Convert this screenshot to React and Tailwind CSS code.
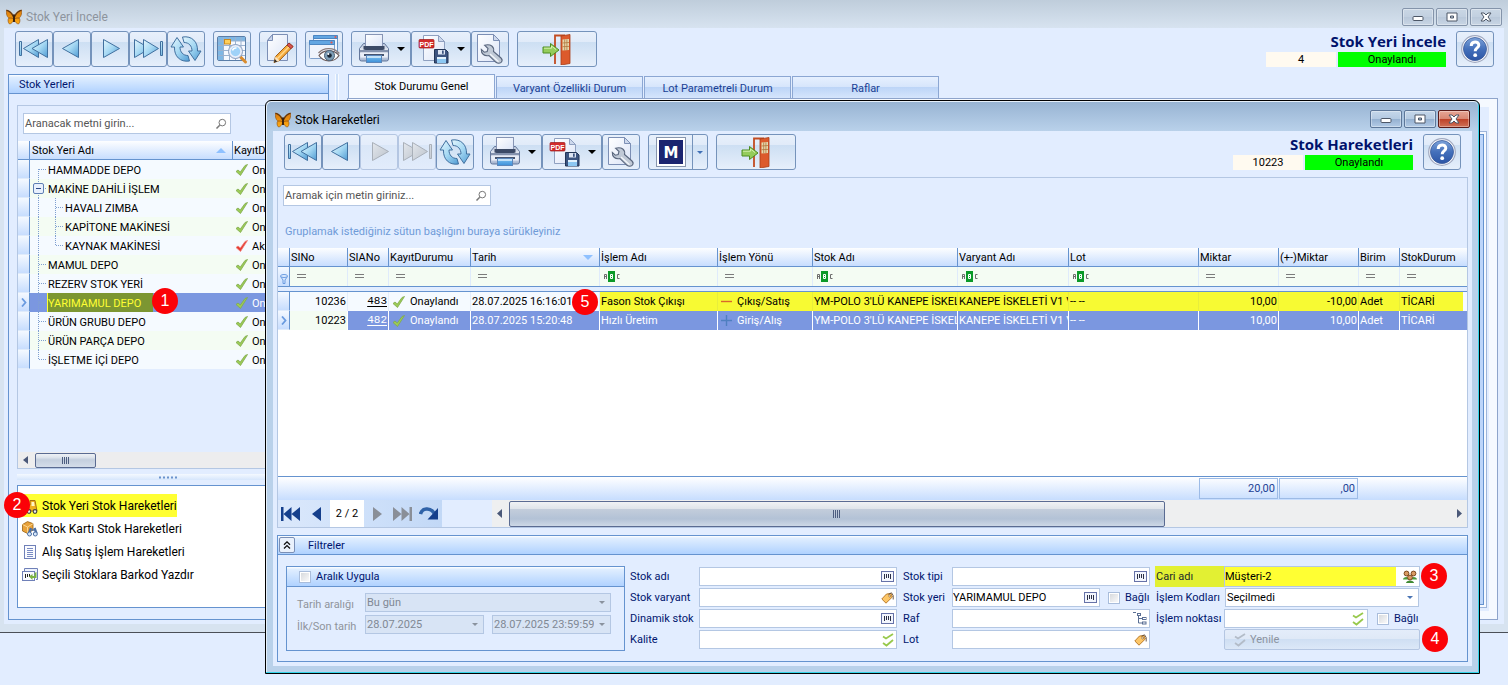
import React from "react";

const toolBtn =
  "flex h-9 shrink-0 items-center justify-center rounded-[3px] border border-[#7593bb] bg-[linear-gradient(#e8f0fb_0%,#e1ebf9_28%,#cddff3_30%,#dde9f8_75%,#e6effb_100%)]";
const toolBtnOff =
  "flex h-9 shrink-0 items-center justify-center rounded-[3px] border border-[#b4c6e2] bg-[linear-gradient(#e8f0fb_0%,#e4edfb_28%,#dae7f8_30%,#e2ecfb_100%)]";
const panelHead =
  "flex items-center border-b border-[#6593cf] bg-[linear-gradient(#ffffff_0%,#e0eeff_12%,#b0d2ff_100%)] text-[#00156e]";
const colHead =
  "h-[19px] overflow-hidden whitespace-nowrap border-b border-[#6593cf] border-r bg-[linear-gradient(#fdfeff,#c7ddfe)] p-0 pl-px pt-px text-left font-normal leading-[17px]";
const indicator =
  "h-[19px] border-b border-r border-b-[#dfebfb] border-r-[#6593cf] bg-[linear-gradient(#f4f9ff,#c7ddfe)] p-0";

/* ---------- icons ---------- */

function Defs() {
  return (
    <svg className="absolute h-0 w-0" aria-hidden="true">
      <defs>
        <linearGradient id="gBlue" x1="0" y1="0" x2="1" y2="1">
          <stop offset="0" stopColor="#e4f6fd" />
          <stop offset="0.5" stopColor="#a5d8f3" />
          <stop offset="1" stopColor="#4f9bd3" />
        </linearGradient>
        <linearGradient id="gGrey" x1="0" y1="0" x2="1" y2="1">
          <stop offset="0" stopColor="#e3e7ec" />
          <stop offset="1" stopColor="#bcc3cc" />
        </linearGradient>
        <linearGradient id="gPage" x1="0" y1="0" x2="1" y2="1">
          <stop offset="0" stopColor="#ffffff" />
          <stop offset="1" stopColor="#dbe4f7" />
        </linearGradient>
        <linearGradient id="gHelp" x1="0" y1="0" x2="0" y2="1">
          <stop offset="0" stopColor="#7da3da" />
          <stop offset="0.5" stopColor="#4470bb" />
          <stop offset="1" stopColor="#2c55a5" />
        </linearGradient>
        <linearGradient id="gTray" x1="0" y1="0" x2="0" y2="1">
          <stop offset="0" stopColor="#b7c3d8" />
          <stop offset="0.5" stopColor="#f0f3f9" />
          <stop offset="1" stopColor="#9fb0cc" />
        </linearGradient>
        <linearGradient id="gInk" x1="0" y1="0" x2="0" y2="1">
          <stop offset="0" stopColor="#7fc4f3" />
          <stop offset="1" stopColor="#3c8fd8" />
        </linearGradient>
        <linearGradient id="gWing" x1="0" y1="0" x2="0" y2="1">
          <stop offset="0" stopColor="#d9780c" />
          <stop offset="1" stopColor="#ffac12" />
        </linearGradient>
      </defs>
    </svg>
  );
}

function Butterfly() {
  return (
    <svg width="16" height="16" viewBox="0 0 16 16" className="shrink-0">
      <path d="M8 8C7 4.500 4 1.500.3 1 0 4.500 .8 7.500 2.800 9 1.600 10.500 1.800 13.500 3.500 15 5.500 15 7 12.500 8 10.500Z" fill="url(#gWing)" stroke="#8c4a0a" strokeWidth="0.600" />
      <path d="M8 8C9 4.500 12 1.500 15.700 1 16 4.500 15.200 7.500 13.200 9 14.400 10.500 14.200 13.500 12.500 15 10.500 15 9 12.500 8 10.500Z" fill="url(#gWing)" stroke="#8c4a0a" strokeWidth="0.600" />
      <path d="M.6 1.300C3.500 2.300 6 4.500 7.500 8M15.400 1.300C12.500 2.300 10 4.500 8.500 8" stroke="#5c3410" strokeWidth="1.200" fill="none" />
      <path d="M3 9C5 9 6.500 9 7.500 10M13 9C11 9 9.500 9 8.500 10" stroke="#8c4a0a" strokeWidth="0.800" fill="none" />
      <path d="M8 5.500v7.500" stroke="#3c2410" strokeWidth="2" fill="none" />
    </svg>
  );
}

function Nav({ kind, off }) {
  const fill = off ? "url(#gGrey)" : "url(#gBlue)";
  const stroke = off ? "#a9b0b9" : "#41709f";
  return (
    <svg width="32" height="32" viewBox="0 0 32 32" fill={fill} stroke={stroke} strokeWidth="1" strokeLinejoin="round">
      {kind === "first" && (
        <>
          <path d="M1.500 8.500h2v14h-2z" />
          <path d="M5.500 15.500 20.500 6.500v18z" />
          <path d="M14 15.500 29.500 6.500v18z" />
        </>
      )}
      {kind === "prev" && <path d="M6.500 15.500 22.500 6.500v18z" />}
      {kind === "next" && <path d="M25.500 15.500 9.500 6.500v18z" />}
      {kind === "last" && (
        <>
          <path d="M18 15.500 2.500 6.500v18z" />
          <path d="M26.500 15.500 11.500 6.500v18z" />
          <path d="M28.500 8.500h2v14h-2z" />
        </>
      )}
      {kind === "refresh" && (
        <>
          <path d="M7 4.500 13.500 14H10C10 19 13 22.500 18 22.500L19.500 28C10 29.500 4 23 4.500 14H1Z" />
          <path d="M25 27.500 18.500 18H22C22 13 19 9.500 14 9.500L12.500 4C22 2.500 28 9 27.500 18H31Z" />
        </>
      )}
    </svg>
  );
}

function TableSearch() {
  return (
    <svg width="32" height="32" viewBox="0 0 32 32">
      <rect x="1.500" y="3.500" width="28" height="24" rx="1.500" fill="#f6f9ff" stroke="#5b7ea8" />
      <path d="M2 4h27v4H2zM2 8h5v19H2z" fill="#7fb7e4" />
      <path d="M2 12.500h27M2 17.500h27M2 22.500h27M7.500 4v23M13.500 4v23M19.500 4v23M25 4v23M2 8h27" stroke="#9bb2cf" fill="none" />
      <rect x="8.500" y="6.500" width="6" height="4.500" fill="#ffcf5a" stroke="#c98a20" />
      <path d="M24 23.500 29.500 29" stroke="#d98c2f" strokeWidth="3" strokeLinecap="round" />
      <circle cx="19.500" cy="18.500" r="6" fill="#9fd2f8" stroke="#e8eefa" strokeWidth="2.500" />
      <circle cx="19.500" cy="18.500" r="7" fill="none" stroke="#6f88ad" strokeWidth="0.800" />
      <path d="M16.500 17.500a3.500 3.500 0 0 1 4-2.500" stroke="#fff" strokeWidth="1.500" fill="none" />
    </svg>
  );
}

function EditPage() {
  return (
    <svg width="32" height="32" viewBox="0 0 32 32">
      <path d="M10.500 1.500h15v26h-20v-20z" fill="url(#gPage)" stroke="#7c8fb5" />
      <path d="M10.500 1.500v6h-5z" fill="#c9d5ec" stroke="#7c8fb5" />
      <path d="M12 29.500 13.500 23.500 27 10 31 13.500 17.500 27.500Z" fill="#f6a93b" stroke="#9b5f1c" />
      <path d="M15.500 25.500 29 11.800" stroke="#ffd88b" strokeWidth="1.500" />
      <path d="M25 12 27 10 31 13.500 29 15.700Z" fill="#d9544f" stroke="#9c3430" />
      <path d="M12 29.500 13 26 15.500 28.500Z" fill="#333" />
      <path d="M13 26 13.500 23.500 17.500 27.500 15.200 28.500Z" fill="#fbe3c0" />
    </svg>
  );
}

function WindowEye() {
  return (
    <svg width="32" height="32" viewBox="0 0 32 32">
      <rect x="5.500" y="2.500" width="24" height="17" rx="1" fill="#f1f6fe" stroke="#6d97c8" />
      <path d="M5.500 2.500h24v3h-24z" fill="#62a6e2" stroke="#4c86c2" />
      <circle cx="27.500" cy="4" r="1.100" fill="#e4564c" />
      <rect x="1.500" y="7.500" width="25" height="18" rx="1" fill="#eef3fc" stroke="#7fa0cc" />
      <path d="M1.500 7.500h25v4h-25z" fill="#62a6e2" stroke="#4c86c2" />
      <circle cx="23.500" cy="9.500" r="1.100" fill="#e4564c" />
      <path d="M11 22.500C15 16.500 26 16 31 22.500 26 30 15.500 29.500 11 22.500Z" fill="#fff" stroke="#6b5a58" strokeWidth="1.200" />
      <path d="M10.500 20C15 14.500 26 13.500 31.300 20.500" stroke="#8a7c7c" strokeWidth="1.300" fill="none" />
      <circle cx="21.500" cy="22.500" r="5" fill="#7f9fb8" stroke="#4a6178" />
      <circle cx="21.500" cy="22.500" r="2.300" fill="#1b2735" />
      <circle cx="20.300" cy="21" r="1" fill="#fff" />
    </svg>
  );
}

function Printer() {
  return (
    <svg width="32" height="32" viewBox="0 0 32 32">
      <path d="M5.500 10.500h21l4 5v10.500q0 2-2 2h-25q-2 0-2-2V15.500z" fill="url(#gTray)" stroke="#64789c" />
      <rect x="7.500" y="1.500" width="17" height="12" fill="url(#gPage)" stroke="#8795b5" />
      <path d="M5.500 13h21v3.500q-10.500 3-21 0z" fill="#3c4a66" />
      <rect x="2" y="17" width="28" height="2.500" fill="#8492ad" />
      <rect x="2.500" y="19.500" width="27" height="5" fill="#e9eef7" />
      <rect x="6" y="21" width="20" height="2" fill="#46546f" />
      <rect x="8.500" y="22.500" width="15" height="7" fill="url(#gInk)" stroke="#5b86ba" />
      <path d="M9 24h14" stroke="#dff1fd" strokeWidth="1.500" />
    </svg>
  );
}

function PdfSave() {
  return (
    <svg width="32" height="32" viewBox="0 0 32 32">
      <path d="M5.500 2.500h15l6 6v19h-21z" fill="url(#gPage)" stroke="#8fa0c0" />
      <path d="M20.500 2.500v6h6z" fill="#cdd8ec" stroke="#8fa0c0" />
      <rect x="1" y="6.500" width="15" height="8.500" rx="1" fill="#d22b2b" stroke="#9c1818" strokeWidth="0.700" />
      <text x="8.500" y="13.500" textAnchor="middle" fontSize="7" fontWeight="bold" fill="#fff" fontFamily="Liberation Sans, sans-serif">PDF</text>
      <path d="M16.500 16.500h11l2.500 2.500v11h-13.500z" fill="#3c5480" stroke="#223556" />
      <rect x="20" y="17" width="7" height="4.500" fill="#dde5f3" />
      <rect x="24" y="17.500" width="1.700" height="3.300" fill="#3c5480" />
      <rect x="19" y="24" width="9" height="6" fill="#8cc7f2" />
      <path d="M19 25h9" stroke="#fff" strokeWidth="1.500" />
    </svg>
  );
}

function WrenchPage() {
  return (
    <svg width="32" height="32" viewBox="0 0 32 32">
      <path d="M3.500 1.500h16l6 6v21h-22z" fill="url(#gPage)" stroke="#7c8fb5" />
      <path d="M19.500 1.500v6h6z" fill="#cdd8ec" stroke="#7c8fb5" />
      <path d="M9.500 12.200 13 15.500 12.200 18.500 9.300 19.200 6.300 16.400C6 21 9.500 23.500 14 22.500L21 29.300C22.600 30.600 25.300 30.700 26.500 29 27.600 27.500 27 26 26 25L18.500 18.500C19.500 14 16 10.500 9.500 12.200Z" transform="translate(1)" fill="#c0c9d6" stroke="#59667d" strokeWidth="1.100" />
      <path d="M16 21 24.500 28.800" stroke="#f4f7fb" strokeWidth="1.300" />
    </svg>
  );
}

function Door() {
  return (
    <svg width="32" height="32" viewBox="0 0 32 32">
      <path d="M14 31V2.500H24" fill="none" stroke="#c24c22" strokeWidth="1.800" />
      <path d="M20 3 29 1.500V30.500L20 32Z" fill="#dc5a2c" stroke="#a93d18" strokeWidth="0.800" />
      <path d="M21.500 6.500 28 6V17L21.500 17.500Z" fill="#e6d9ae" />
      <path d="M23.700 6.500v11M25.900 6.500v11M21.500 10l6.500-.5M21.500 13.700l6.500-.3" stroke="#b1763c" strokeWidth="0.800" />
      <path d="M2 14H9.500V10.500L18 17 9.500 23.500V20H2Z" fill="#94cc5b" stroke="#4d8d22" />
      <path d="M3 15.200H10.500V13L15 16.500" stroke="#d4f0ae" fill="none" />
    </svg>
  );
}

function HelpMark() {
  return (
    <svg width="30" height="30" viewBox="0 0 30 30">
      <circle cx="15" cy="15" r="13.300" fill="#fdfdff" stroke="#a0a9c0" strokeWidth="1.200" />
      <circle cx="15" cy="15" r="11.500" fill="url(#gHelp)" stroke="#3a5a9a" strokeWidth="0.800" />
      <path d="M11.200 12C11.200 6.500 19 6.800 18.800 11.300 18.700 14 15.200 14 15.200 17.200" fill="none" stroke="#fff" strokeWidth="3" />
      <circle cx="15.200" cy="21.200" r="1.900" fill="#fff" />
    </svg>
  );
}

function Check({ color = "green" }) {
  const fill = color === "red" ? "#e63c34" : "#9ccb56";
  const line = color === "red" ? "#f08078" : "#7fa94c";
  return (
    <svg width="14" height="14" viewBox="0 0 14 14" className="shrink-0">
      <path d="M1 8.500 3 7 5.300 9 10 2.500 12.500 1.500 5.500 12.500Z" fill={fill} stroke={line} strokeWidth="0.800" />
    </svg>
  );
}

function DoubleCheck({ off }) {
  return (
    <svg width="12" height="14" viewBox="0 0 12 14" fill="none" stroke={off ? "#b3bcc8" : "#98c94c"} strokeWidth="1.800" className="shrink-0">
      <path d="M1 3.500 4 5.500 11 1" />
      <path d="M1 10 4.500 12.500 11 7" />
    </svg>
  );
}

function Magnifier() {
  return (
    <svg width="12" height="12" viewBox="0 0 12 12" fill="none" stroke="#777" className="shrink-0">
      <circle cx="7.300" cy="4.600" r="3.300" />
      <path d="M4.700 7.200 1.500 10.500" strokeWidth="1.500" />
    </svg>
  );
}

function Caret({ className = "text-black" }) {
  return (
    <svg width="8" height="4" viewBox="0 0 8 4" className={`shrink-0 ${className}`}>
      <path d="M0 0h8L4 4z" fill="currentColor" />
    </svg>
  );
}

function SmallCaret({ className }) {
  return (
    <svg width="6" height="3" viewBox="0 0 6 3" className={className}>
      <path d="M0 0h6L3 3z" fill="currentColor" />
    </svg>
  );
}

function Barcode() {
  return (
    <svg width="13" height="11" viewBox="0 0 13 11" className="shrink-0">
      <rect x="0.500" y="0.500" width="12" height="10" fill="#f3f6fd" stroke="#6672a8" />
      <path d="M3.500 3v5M5.500 3v4M7.500 3v4M9.500 3v5" stroke="#2b2f45" />
    </svg>
  );
}

function Tag() {
  return (
    <svg width="13" height="12" viewBox="0 0 13 12" className="shrink-0">
      <path d="M.8 7 5.500 2 10 1.500 11.300 5 5 11.200Z" fill="#fdc768" stroke="#b3721f" strokeWidth="0.900" />
      <path d="M7.500 2.300 10.500.8 12.200 3.500V7.500" fill="none" stroke="#5b4a3a" strokeWidth="0.900" />
      <circle cx="8.700" cy="4" r="1" fill="#fff" stroke="#7c4d16" strokeWidth="0.600" />
    </svg>
  );
}

function TreeIcon() {
  return (
    <svg width="14" height="13" viewBox="0 0 14 13" fill="none" stroke="#5a6f94" className="shrink-0">
      <path d="M0 0.500h3M5.500 3.500v7.500h4M5.500 6.500h4" />
      <rect x="4.500" y="1.500" width="3" height="2" />
      <rect x="9.500" y="5.500" width="3.500" height="2" />
      <rect x="9.500" y="10" width="3.500" height="2" />
    </svg>
  );
}

function People() {
  return (
    <svg width="14" height="13" viewBox="0 0 14 13" className="shrink-0">
      <path d="M0 9.500C0 6 6.500 6 6.500 9.500ZM7.500 9.500C7.500 6 14 6 14 9.500Z" fill="#4d9a3c" />
      <circle cx="3.500" cy="3.500" r="2.400" fill="#d99a62" stroke="#7d4a1e" />
      <circle cx="10.500" cy="3.500" r="2.400" fill="#d99a62" stroke="#7d4a1e" />
      <path d="M3 13C3 9.500 11 9.500 11 13Z" fill="#3f8a33" />
      <circle cx="7" cy="7.500" r="2.400" fill="#d99a62" stroke="#7d4a1e" />
    </svg>
  );
}

function Abc() {
  return (
    <svg width="16" height="11" viewBox="0 0 16 11" fill="none" stroke="#6d6d6d" className="block">
      <path d="M0.500 8V3.500h2V8M0.500 5.500h2M15.500 3.500h-2v4h2" />
      <rect x="4" y="0" width="7" height="11" fill="#0b9a28" stroke="none" />
      <path d="M6.500 3.500h2v2h-2zM6.500 5.500h2v2h-2z" stroke="#fff" />
    </svg>
  );
}

function Equals() {
  return (
    <svg width="9" height="5" viewBox="0 0 9 5" className="block">
      <path d="M0 0.500h9M0 3.500h9" stroke="#7b7b7b" />
    </svg>
  );
}

function Chevron() {
  return (
    <svg width="6" height="9" viewBox="0 0 6 9" className="mx-auto block">
      <path d="M1 .5 4.500 4.500 1 8.500" fill="none" stroke="#6a9be0" strokeWidth="1.800" />
    </svg>
  );
}

function Forklift() {
  return (
    <svg width="16" height="16" viewBox="0 0 16 16">
      <path d="M3 1v10" stroke="#6b5a20" strokeWidth="1.500" />
      <path d="M5 13V8l3-1V2.500h5L15 13Z" fill="#efb021" stroke="#a86f10" />
      <path d="M9.500 4h2.500l.7 4h-3.200z" fill="#fff5c5" />
      <circle cx="7" cy="13.500" r="1.800" fill="#eee" stroke="#444" strokeWidth="1.200" />
      <circle cx="13" cy="13.500" r="1.800" fill="#eee" stroke="#444" strokeWidth="1.200" />
    </svg>
  );
}

function BoxSearch() {
  return (
    <svg width="16" height="16" viewBox="0 0 16 16">
      <path d="M.5 3.500 5.500 .6l5.500 2V9L5.500 12.500.5 10Z" fill="#e9a23b" stroke="#9b6213" strokeWidth="0.800" />
      <path d="M.5 3.500 5.500 6 11 2.700M5.500 6v6.500" stroke="#fbd58c" strokeWidth="1" fill="none" />
      <path d="M9 7 7 12.500M12.500 7 14.500 12.500" stroke="#4c6fa3" strokeWidth="2.400" />
      <path d="M9.500 9h3" stroke="#4c6fa3" strokeWidth="1.500" />
      <circle cx="7.500" cy="13" r="2" fill="#d7e8fb" stroke="#4c6fa3" />
      <circle cx="13.300" cy="13" r="2" fill="#d7e8fb" stroke="#4c6fa3" />
    </svg>
  );
}

function Doc() {
  return (
    <svg width="16" height="16" viewBox="0 0 16 16">
      <rect x="2.500" y="1.500" width="11" height="13" fill="#fbfcff" stroke="#6f80b8" />
      <path d="M5 4.500h6M5 6.500h6M5 8.500h6M5 10.500h6M5 12.500h6" stroke="#7a8cc4" />
    </svg>
  );
}

function BarcodePrint() {
  return (
    <svg width="16" height="16" viewBox="0 0 16 16">
      <path d="M2.500 4V1.500h13v11H14" fill="#eef3fd" stroke="#6f80b8" />
      <rect x="0.500" y="4.500" width="12" height="9" fill="#f8faff" stroke="#6f80b8" />
      <path d="M3.500 7v4M5.500 7v3M7.500 7v3" stroke="#222" />
      <path d="M14.500 5v6h-4v2L7 9.500 10.500 7v2h2V6Z" fill="#7cb544" />
    </svg>
  );
}

/* ---------- shared pieces ---------- */

function Badge({ n, className }) {
  return (
    <span
      className={`pointer-events-none absolute z-20 flex size-[26px] items-center justify-center rounded-full bg-[#fb0207] font-['Liberation_Sans',sans-serif] text-base leading-none text-white ${className}`}
    >
      {n}
    </span>
  );
}

function WindowButtons({ active }) {
  const plain = active
    ? "border-[#5d7799] bg-[linear-gradient(#c5d7ea_0%,#b4cae2_48%,#94b0d0_50%,#b3cbe6_100%)]"
    : "border-[#8494aa] bg-[linear-gradient(#cad7e5_0%,#c2d0e0_48%,#b9c8da_50%,#c8d5e4_100%)]";
  const close = active
    ? "border-[#5a1a18] bg-[linear-gradient(#e6a696_0%,#d98774_48%,#bd4027_50%,#cf7158_100%)]"
    : plain;
  const base = "flex h-[18px] w-8 items-center justify-center rounded-[2px] border shadow-[inset_0_0_0_1px_rgba(255,255,255,0.35)]";
  return (
    <div className="flex gap-[2px]">
      <button type="button" aria-label="Simge durumuna küçült" className={`${base} ${plain}`}>
        <svg width="12" height="10" viewBox="0 0 12 10">
          <rect x="1" y="4.500" width="10" height="4" rx="1" fill="#fff" stroke="#4d5767" />
        </svg>
      </button>
      <button type="button" aria-label="Ekranı kapla" className={`${base} ${plain}`}>
        <svg width="12" height="10" viewBox="0 0 12 10">
          <path d="M1 1h10v8H1zM4.500 4v2h3V4z" fillRule="evenodd" fill="#fff" stroke="#4d5767" />
        </svg>
      </button>
      <button type="button" aria-label="Kapat" className={`${base} ${close}`}>
        <svg width="12" height="10" viewBox="0 0 12 10">
          <path d="M1 1h3l2 2 2-2h3L8 5l3 4H8L6 7 4 9H1l3-4z" fill="#fff" stroke="#4d5767" />
        </svg>
      </button>
    </div>
  );
}

function ToolButton({ label, width = "w-[38px]", off, children }) {
  return (
    <button type="button" aria-label={label} disabled={off} className={`${off ? toolBtnOff : toolBtn} ${width}`}>
      {children}
    </button>
  );
}

function NavButtons({ forwardOff }) {
  return (
    <div className="flex">
      <ToolButton label="İlk kayıt"><Nav kind="first" /></ToolButton>
      <ToolButton label="Önceki kayıt"><Nav kind="prev" /></ToolButton>
      <ToolButton label="Sonraki kayıt" off={forwardOff}><Nav kind="next" off={forwardOff} /></ToolButton>
      <ToolButton label="Son kayıt" off={forwardOff}><Nav kind="last" off={forwardOff} /></ToolButton>
      <ToolButton label="Yenile"><Nav kind="refresh" /></ToolButton>
    </div>
  );
}

function OutputButtons() {
  return (
    <div className="flex">
      <ToolButton label="Yazdır" width="w-[60px] gap-[7px]"><Printer /><Caret /></ToolButton>
      <ToolButton label="PDF kaydet" width="w-[60px] gap-[7px]"><PdfSave /><Caret /></ToolButton>
      <ToolButton label="Ayarlar"><WrenchPage /></ToolButton>
    </div>
  );
}

function RecordInfo({ title, id }) {
  return (
    <div className="ml-auto flex gap-[10px]">
      <div>
        <h1 className="h-[21px] text-right font-['Open_Sans',sans-serif] text-[15px] font-bold leading-[21px] text-[#00126b]">{title}</h1>
        <div className="flex justify-end gap-[2px] text-center leading-4">
          <div className="h-[15px] w-[70px] bg-[#fffaf0]">{id}</div>
          <div className="h-[15px] w-[108px] bg-[#00ff00]">Onaylandı</div>
        </div>
      </div>
      <ToolButton label="Yardım"><HelpMark /></ToolButton>
    </div>
  );
}

function SearchBox({ placeholder }) {
  return (
    <label className="flex h-[21px] w-[208px] items-center border border-[#b4c7e3] bg-white pl-px pr-[3px]">
      <input type="text" aria-label={placeholder} placeholder={placeholder} className="min-w-0 flex-1 outline-none placeholder:text-[#555]" />
      <Magnifier />
    </label>
  );
}

/* ---------- back window ---------- */

const places = [
  { name: "HAMMADDE DEPO", level: 0, first: true },
  { name: "MAKİNE DAHİLİ İŞLEM", level: 0, open: true },
  { name: "HAVALI ZIMBA", level: 1 },
  { name: "KAPİTONE MAKİNESİ", level: 1 },
  { name: "KAYNAK MAKİNESİ", level: 1, lastChild: true, bad: true },
  { name: "MAMUL DEPO", level: 0 },
  { name: "REZERV STOK YERİ", level: 0 },
  { name: "YARIMAMUL DEPO", level: 0, selected: true },
  { name: "ÜRÜN GRUBU DEPO", level: 0 },
  { name: "ÜRÜN PARÇA DEPO", level: 0 },
  { name: "İŞLETME İÇİ DEPO", level: 0, last: true },
];

function Branch({ row }) {
  const w = row.level ? 34 : 17;
  return (
    <svg width={w} height="19" viewBox={`0 0 ${w} 19`} className="shrink-0" fill="none" stroke="#7f9fd0" strokeDasharray="1 1">
      <path d={`M8.500 ${row.first ? 9 : 0}V${row.last ? 9 : 19}`} />
      {row.level === 0 && <path d="M9 9.500h8" />}
      {row.level === 1 && <path d={`M25.500 0V${row.lastChild ? 9 : 19}M26 9.500h8`} />}
      {row.open && (
        <>
          <rect x="3.500" y="4.500" width="10" height="10" rx="1.500" fill="#e8f0fd" stroke="#5f7fb4" strokeDasharray="none" />
          <path d="M6 9.500h5" stroke="#2d4a86" strokeDasharray="none" />
        </>
      )}
    </svg>
  );
}

function PlaceTree() {
  return (
    <table className="w-full table-fixed border-separate border-spacing-0">
      <colgroup>
        <col className="w-[12px]" />
        <col className="w-[203px]" />
        <col />
      </colgroup>
      <thead>
        <tr>
          <th className={colHead} aria-label="Satır" />
          <th className={colHead}>
            <span className="flex items-center justify-between pl-px pr-[6px]">
              Stok Yeri Adı
              <svg width="10" height="5" viewBox="0 0 10 5"><path d="M0 5h10L5 0z" fill="#8fc1ff" /></svg>
            </span>
          </th>
          <th className={colHead}>KayıtDurumu</th>
        </tr>
      </thead>
      <tbody className="leading-[21px]">
        {places.map((p, i) => (
          <tr key={p.name} className={p.selected ? "bg-[#7b97e0] text-white" : i % 2 ? "bg-[#f4fcf3]" : "bg-[#f5faff]"}>
            <td className={indicator}>{p.selected && <Chevron />}</td>
            <td className="h-[19px] p-0">
              <div className="flex h-[19px]">
                <Branch row={p} />
                <span className={p.selected ? "h-[19px] w-[106px] whitespace-nowrap border-l border-[#ffff33] bg-[#7c9632] text-[#ffff33]" : "h-[19px] whitespace-nowrap pl-px"}>
                  {p.name}
                </span>
              </div>
            </td>
            <td className="h-[19px] p-0">
              <div className="flex h-[19px] gap-[3px] whitespace-nowrap pl-[2px]">
                <span className="flex items-center"><Check color={p.bad ? "red" : "green"} /></span>
                {p.bad ? "Aktif Değil" : "Onaylandı"}
              </div>
            </td>
          </tr>
        ))}
      </tbody>
    </table>
  );
}

const links = [
  { text: "Stok Yeri Stok Hareketleri", Icon: Forklift, marked: true },
  { text: "Stok Kartı Stok Hareketleri", Icon: BoxSearch },
  { text: "Alış Satış İşlem Hareketleri", Icon: Doc },
  { text: "Seçili Stoklara Barkod Yazdır", Icon: BarcodePrint },
];

function PlacesPanel() {
  return (
    <section className="flex w-[321px] shrink-0 flex-col border border-[#6593cf] bg-[#e2edff]">
      <h2 className={`${panelHead} h-[19px] pl-[10px] pt-px`}>Stok Yerleri</h2>
      <div className="flex flex-1 flex-col px-2 pb-[11px] pt-[11px]">
        <div className="flex flex-1 flex-col border border-[#b4c7e3]">
          <div className="px-[5px] py-[7px]">
            <SearchBox placeholder="Aranacak metni girin..." />
          </div>
          <PlaceTree />
          <div className="mt-auto flex h-4 items-center bg-[#ededee] pl-[5px]">
            <svg width="5" height="8" viewBox="0 0 5 8"><path d="M5 0v8L0 4z" fill="#4a5878" /></svg>
            <div className="ml-[7px] flex h-[15px] w-[61px] items-center justify-center gap-px rounded-[2px] border border-[#5a6b92] bg-[linear-gradient(#eef1f5_0%,#dfe5ed_25%,#c4cfde_45%,#d4dde9_100%)]">
              <svg width="8" height="7" viewBox="0 0 8 7"><path d="M.5 0v7M2.500 0v7M4.500 0v7M6.500 0v7" stroke="#4d5d80" /></svg>
            </div>
          </div>
        </div>
        <div className="mb-[5px] mt-[5px] flex h-[6px] items-center justify-center bg-[linear-gradient(#f4f9ff,#d6e6fc)]">
          <svg width="20" height="3" viewBox="0 0 20 3"><path d="M0 1.500h20" stroke="#6b93cc" strokeWidth="2" strokeDasharray="2 2" /></svg>
        </div>
        <ul className="h-[123px] border border-[#6593cf] bg-white pl-1 pt-2 text-xs text-black">
          {links.map(({ text, Icon, marked }) => (
            <li key={text} className="flex h-[23px]">
              <a href="#" className={`flex items-center gap-[4px] ${marked ? "bg-[#ffff33]" : ""}`}>
                <Icon />
                {text}
              </a>
            </li>
          ))}
        </ul>
      </div>
    </section>
  );
}

function TabArea() {
  const idle =
    "h-[22px] w-[147px] border border-b-0 border-[#8ca7d3] bg-[linear-gradient(#e6f0ff_0%,#d6e5fb_48%,#bdd5f7_50%,#d5e5fc_100%)] pt-[2px] text-[#1a3f94]";
  return (
    <section className="flex min-w-0 flex-1 flex-col">
      <div role="tablist" className="flex items-end gap-px pl-px">
        <button type="button" role="tab" aria-selected="true" className="h-6 w-[147px] border border-b-0 border-[#8ca7d3] bg-[#f5f9ff] pt-px">
          Stok Durumu Genel
        </button>
        <button type="button" role="tab" className={idle}>Varyant Özellikli Durum</button>
        <button type="button" role="tab" className={idle}>Lot Parametreli Durum</button>
        <button type="button" role="tab" className={idle}>Raflar</button>
      </div>
      <div className="flex flex-1 border border-[#8ea4cb] bg-[#f5f9ff] p-2">
        <div className="flex flex-1 bg-[#e2edff] pb-[3px] pr-[2px] pt-6">
          <div className="flex flex-1 border border-[#9db5da] bg-[#f5f9ff] p-[2px]">
            <div className="flex-1 border border-[#6593cf] bg-[#bcd5fa]" />
          </div>
        </div>
      </div>
    </section>
  );
}

function BackWindow() {
  return (
    <div className="flex h-[633px] flex-col border-b border-[#4a4f57] bg-[#d7e3f0]">
      <header className="flex h-7 items-center gap-1 bg-[linear-gradient(#bfcddb,#d7e3f0)] pl-[6px] pr-[6px] pt-[5px] text-xs text-[#8d949d]">
        <Butterfly />
        <span className="flex-1">Stok Yeri İncele</span>
        <WindowButtons />
      </header>
      <main className="mx-1 mb-2 flex flex-1 flex-col bg-[#e2edff] pb-1">
        <div className="flex pb-[7px] pl-[11px] pr-[10px] pt-[3px]">
          <div className="flex gap-2">
            <NavButtons />
            <ToolButton label="Tabloda ara"><TableSearch /></ToolButton>
            <ToolButton label="Düzenle"><EditPage /></ToolButton>
            <ToolButton label="Önizle"><WindowEye /></ToolButton>
            <OutputButtons />
            <ToolButton label="Çıkış" width="w-[80px]"><Door /></ToolButton>
          </div>
          <RecordInfo title="Stok Yeri İncele" id="4" />
        </div>
        <div className="flex flex-1 pl-1 pr-[6px]">
          <PlacesPanel />
          <div className="ml-[6px] mr-2 w-1 border-x border-[#f7fbff] bg-[#cfe1f9]" />
          <TabArea />
        </div>
      </main>
    </div>
  );
}

/* ---------- front window ---------- */

const columns = [
  { label: "SINo", w: "w-[58px]", filter: "eq" },
  { label: "SIANo", w: "w-[41px]", filter: "eq" },
  { label: "KayıtDurumu", w: "w-[82px]", filter: "eq" },
  { label: "Tarih", w: "w-[129px]", filter: "eq", sorted: true },
  { label: "İşlem Adı", w: "w-[118px]", filter: "abc" },
  { label: "İşlem Yönü", w: "w-[95px]", filter: "eq" },
  { label: "Stok Adı", w: "w-[145px]", filter: "abc" },
  { label: "Varyant Adı", w: "w-[111px]", filter: "abc" },
  { label: "Lot", w: "w-[130px]", filter: "abc" },
  { label: "Miktar", w: "w-[80px]", filter: "eq" },
  { label: "(+-)Miktar", w: "w-[80px]", filter: "eq" },
  { label: "Birim", w: "w-[41px]", filter: "eq" },
  { label: "StokDurum", w: "", filter: "eq" },
];

const moves = [
  { no: "10236", sub: "483", date: "28.07.2025 16:16:01", op: "Fason Stok Çıkışı", dir: "Çıkış/Satış", minus: true, delta: "-10,00" },
  { no: "10223", sub: "482", date: "28.07.2025 15:20:48", op: "Hızlı Üretim", dir: "Giriş/Alış", delta: "10,00", selected: true },
];

function MoveRow({ m }) {
  const line = m.selected ? "border-white" : "border-[#e4eefb]";
  const mark = m.selected ? "border-white" : "border-[#e8ee3c] bg-[#f7fa33]";
  const cell = "h-[19px] overflow-hidden whitespace-nowrap border-r p-0 px-px leading-[19px]";
  return (
    <tr className={m.selected ? "bg-[#7b97e0] text-white" : "bg-[#f5faff]"}>
      <td className={indicator}>{m.selected && <Chevron />}</td>
      <td className={`${cell} ${line} text-right ${m.selected ? "bg-[#f4fcf3] text-black" : ""}`}>{m.no}</td>
      <td className={`${cell} ${line}`}>
        <a href="#" className="block h-[19px] text-right font-['Liberation_Mono',monospace] underline underline-offset-2">{m.sub}</a>
      </td>
      <td className={`${cell} ${line}`}>
        <span className="flex items-center gap-1 pl-[2px]"><Check />Onaylandı</span>
      </td>
      <td className={`${cell} ${line}`}>{m.date}</td>
      <td className={`${cell} ${mark}`}>{m.op}</td>
      <td className={`${cell} ${mark}`}>
        <span className="flex items-center gap-1">
          <svg width="13" height="12" viewBox="0 0 13 12" className="ml-px">
            <path d={m.minus ? "M1 5.500h11" : "M1 5.500h11M6.500 0v11"} stroke={m.minus ? "#d9682c" : "#4f7fc0"} strokeWidth="1.400" />
          </svg>
          {m.dir}
        </span>
      </td>
      <td className={`${cell} ${mark}`}>YM-POLO 3'LÜ KANEPE İSKELETİ</td>
      <td className={`${cell} ${mark}`}>KANEPE İSKELETİ V1 V</td>
      <td className={`${cell} ${mark}`}>-- --</td>
      <td className={`${cell} ${mark} text-right`}>10,00</td>
      <td className={`${cell} ${mark} text-right`}>{m.delta}</td>
      <td className={`${cell} ${mark}`}>Adet</td>
      <td className={`h-[19px] p-0 pl-px leading-[19px] ${m.selected ? "" : "border-r-4 border-[#f5faff] bg-[#f7fa33]"}`}>TİCARİ</td>
    </tr>
  );
}

function MovesTable() {
  return (
    <table className="w-full table-fixed border-separate border-spacing-0">
      <colgroup>
        <col className="w-[12px]" />
        {columns.map((c) => <col key={c.label} className={c.w} />)}
      </colgroup>
      <thead>
        <tr>
          <th className={colHead} aria-label="Satır" />
          {columns.map((c) => (
            <th key={c.label} className={`${colHead} last:border-r-0`}>
              <span className="flex items-center justify-between pr-[6px]">
                {c.label}
                {c.sorted && <svg width="10" height="5" viewBox="0 0 10 5"><path d="M0 0h10L5 5z" fill="#8fc1ff" /></svg>}
              </span>
            </th>
          ))}
        </tr>
        <tr className="bg-[#f4fcf3]">
          <td className="h-[19px] border-r border-[#6593cf] bg-[linear-gradient(#f4f9ff,#c7ddfe)] p-0">
            <svg width="8" height="10" viewBox="0 0 8 10" className="mx-auto mt-1 block" fill="none" stroke="#6a9be0">
              <ellipse cx="4" cy="2" rx="3.500" ry="1.500" />
              <path d="M.5 2.500 3 6v3.500h2V6l2.500-3.500" />
            </svg>
          </td>
          {columns.map((c) => (
            <td key={c.label} className="h-[19px] border-r border-[#dfebfb] p-0 pl-[7px] last:border-r-0">
              {c.filter === "abc" ? <div className="-ml-[3px]"><Abc /></div> : <Equals />}
            </td>
          ))}
        </tr>
        <tr>
          <td colSpan={14} className="h-[6px] border-y border-[#6593cf] bg-[#e2edff] p-0" />
        </tr>
      </thead>
      <tbody>
        {moves.map((m) => <MoveRow key={m.no} m={m} />)}
      </tbody>
    </table>
  );
}

function Pager() {
  const b = "flex h-[27px] items-center justify-center";
  return (
    <div className="flex h-[27px] items-center">
      <div className="flex w-[164px] items-center bg-[linear-gradient(90deg,#dbe8fb,#cfe1fa,#c2d8f6)]">
        <button type="button" aria-label="İlk" className={`${b} w-[25px]`}>
          <svg width="19" height="14" viewBox="0 0 19 14" fill="#153f8c"><path d="M0 0h2.500v14H0zM10.500 0v14L2.500 7zM19 0v14L10.500 7z" /></svg>
        </button>
        <button type="button" aria-label="Önceki" className={`${b} w-[27px]`}>
          <svg width="9" height="14" viewBox="0 0 9 14" fill="#153f8c"><path d="M9 0v14L0 7z" /></svg>
        </button>
        <span className={`${b} w-[34px] bg-white`}>2 / 2</span>
        <button type="button" disabled aria-label="Sonraki" className={`${b} w-[26px]`}>
          <svg width="9" height="14" viewBox="0 0 9 14" fill="#8a8f98"><path d="M0 0v14l9-7z" /></svg>
        </button>
        <button type="button" disabled aria-label="Son" className={`${b} w-[25px]`}>
          <svg width="19" height="14" viewBox="0 0 19 14" fill="#8a8f98"><path d="M16.500 0H19v14h-2.500zM0 0v14l8.500-7zM8.500 0v14l8-7z" /></svg>
        </button>
        <button type="button" aria-label="Yenile" className={`${b} w-[27px]`}>
          <svg width="20" height="13" viewBox="0 0 20 13"><path d="M1.500 7C3 1 11 0 15 6" fill="none" stroke="#2f62a8" strokeWidth="3.500" /><path d="M19 1v11.500H8.500z" fill="#153f8c" /></svg>
        </button>
      </div>
      <div className="ml-[50px] flex h-[27px] flex-1 items-center bg-[#eeeff0] pl-[5px] pr-[5px]">
        <svg width="5" height="9" viewBox="0 0 5 9"><path d="M5 0v9L0 4.500z" fill="#4a5878" /></svg>
        <div className="ml-[7px] flex h-[26px] w-[68%] items-center justify-center rounded-[2px] border border-[#5a6b92] bg-[linear-gradient(#f0f2f4_0%,#dfe4ea_28%,#c3cddb_30%,#b3c2d6_70%,#cdd8e6_100%)]">
          <svg width="8" height="8" viewBox="0 0 8 8"><path d="M.5 0v8M2.500 0v8M4.500 0v8M6.500 0v8" stroke="#4d5d80" /></svg>
        </div>
        <svg width="5" height="9" viewBox="0 0 5 9" className="ml-auto"><path d="M0 0v9l5-4.500z" fill="#4a5878" /></svg>
      </div>
    </div>
  );
}

function Field({ id, label, value = "", icon, width = "w-[198px]" }) {
  return (
    <>
      <label htmlFor={id}>{label}</label>
      <div className={`flex h-[19px] items-center border border-[#b4c7e3] bg-white pr-[2px] ${width}`}>
        <input id={id} type="text" defaultValue={value} className="min-w-0 flex-1 text-black outline-none" />
        {icon}
      </div>
    </>
  );
}

function Tick({ id, label }) {
  return (
    <span className="flex items-center gap-[5px]">
      <input id={id} type="checkbox" className="size-3 appearance-none border border-[#a9bddb] bg-[linear-gradient(135deg,#d3d6da,#fdfdfd)] shadow-[inset_0_0_0_1px_#fff]" />
      <label htmlFor={id}>{label}</label>
    </span>
  );
}

function Drop({ id, label, value, off, width }) {
  return (
    <div className={`relative ${width}`}>
      <select
        id={id}
        aria-label={label}
        disabled={off}
        className={`block h-[19px] w-full appearance-none border border-[#b4c7e3] pl-px pr-4 leading-[17px] opacity-100 ${off ? "bg-[#d8e4f5] text-[#808894]" : "bg-white text-black"}`}
      >
        <option>{value}</option>
      </select>
      <SmallCaret className={`pointer-events-none absolute right-[6px] top-2 ${off ? "text-[#8a929e]" : "text-[#4a74b4]"}`} />
    </div>
  );
}

function Filters() {
  const grid = "mt-px grid auto-rows-[19px] content-start items-center gap-y-[2px] leading-[19px]";
  return (
    <section className="mt-[7px] border border-[#6593cf] text-[#00156e]">
      <div className={`${panelHead} h-[19px] gap-[13px] pl-px`}>
        <button type="button" aria-label="Daralt" className="flex size-4 items-center justify-center rounded-[2px] border border-[#7b8fb5] bg-[#eaf1fc]">
          <svg width="8" height="8" viewBox="0 0 8 8" fill="none" stroke="#111" strokeWidth="1.300"><path d="M1 3.800 4 .9l3 2.900M1 7.500l3-2.900 3 2.900" /></svg>
        </button>
        <h2 className="pt-px">Filtreler</h2>
      </div>
      <div className="flex pb-[10px] pl-2 pt-[11px]">
        <fieldset className="h-[85px] w-[339px] shrink-0 border border-[#6593cf]">
          <div className={`${panelHead} h-5 pl-3`}>
            <Tick id="range" label="Aralık Uygula" />
          </div>
          <div className="grid auto-rows-[19px] grid-cols-[68px_119px_119px] gap-y-[3px] pl-[10px] pt-[6px] leading-[19px] text-[#8f949c]">
            <label htmlFor="period" className="pt-[2px]">Tarih aralığı</label>
            <div className="col-span-2 w-[246px]">
              <Drop id="period" label="Tarih aralığı" value="Bu gün" off width="w-[246px]" />
            </div>
            <label htmlFor="from" className="whitespace-nowrap pt-[2px]">İlk/Son tarih</label>
            <Drop id="from" label="İlk tarih" value="28.07.2025" off width="w-[119px]" />
            <div className="pl-2">
              <Drop id="to" label="Son tarih" value="28.07.2025 23:59:59" off width="w-[119px]" />
            </div>
          </div>
        </fieldset>
        <div className={`${grid} ml-[5px] grid-cols-[69px_198px]`}>
          <Field id="stokadi" label="Stok adı" icon={<Barcode />} />
          <Field id="varyant" label="Stok varyant" icon={<Tag />} />
          <Field id="dinamik" label="Dinamik stok" icon={<Barcode />} />
          <Field id="kalite" label="Kalite" icon={<DoubleCheck />} />
        </div>
        <div className={`${grid} ml-[6px] grid-cols-[49px_198px]`}>
          <Field id="tip" label="Stok tipi" icon={<Barcode />} />
          <label htmlFor="yer">Stok yeri</label>
          <div className="flex items-center gap-2">
            <div className="flex h-[19px] w-[148px] items-center border border-[#b4c7e3] bg-white pr-[2px]">
              <input id="yer" type="text" defaultValue="YARIMAMUL DEPO" className="min-w-0 flex-1 text-black outline-none" />
              <Barcode />
            </div>
            <Tick id="yerbagli" label="Bağlı" />
          </div>
          <Field id="raf" label="Raf" icon={<TreeIcon />} />
          <Field id="lot" label="Lot" icon={<Tag />} />
        </div>
        <div className={`${grid} ml-[5px] grid-cols-[69px_196px]`}>
          <label htmlFor="cari" className="h-[21px] bg-[#e2f033] pl-px leading-[21px] text-[#1c2a2a]">Cari adı</label>
          <div className="flex h-[21px] items-center border border-[#b4c7e3] bg-white pr-[2px]">
            <input id="cari" type="text" defaultValue="Müşteri-2" className="mr-[7px] h-[19px] min-w-0 flex-1 bg-[#ffff33] text-black outline-none" />
            <People />
          </div>
          <label htmlFor="kod" className="pl-px">İşlem Kodları</label>
          <Drop id="kod" label="İşlem Kodları" value="Seçilmedi" width="ml-px w-[194px]" />
          <label htmlFor="nokta" className="whitespace-nowrap pl-px">İşlem noktası</label>
          <div className="flex items-center gap-[9px]">
            <div className="flex h-[19px] w-[144px] items-center border border-[#b4c7e3] bg-white pr-[3px]">
              <input id="nokta" type="text" className="min-w-0 flex-1 outline-none" />
              <DoubleCheck />
            </div>
            <Tick id="noktabagli" label="Bağlı" />
          </div>
          <span />
          <button type="button" disabled className="flex h-[21px] items-center gap-1 rounded-[2px] border border-[#b4c6e2] bg-[linear-gradient(#e4edfa_0%,#dfe9f7_45%,#cfdff3_50%,#dce8f8_100%)] pl-[9px] text-[#8b939f]">
            <DoubleCheck off />
            Yenile
          </button>
        </div>
      </div>
    </section>
  );
}

function FrontWindow() {
  return (
    <div className="absolute bottom-[11px] left-[265px] right-7 top-[100px] flex flex-col rounded-t-[6px] border border-black bg-[#b9d1ea] shadow-[inset_-1px_-1px_0_#35d5ea,inset_1px_1px_0_#e6f0fa]">
      <header className="mx-px mt-px flex h-[29px] items-center gap-1 rounded-t-[5px] bg-[linear-gradient(#98b4d3,#b9d1ea)] pl-2 pr-2 pt-[7px] text-xs">
        <Butterfly />
        <span className="flex-1">Stok Hareketleri</span>
        <div className="-mt-[2px]"><WindowButtons active /></div>
      </header>
      <main className="mx-[7px] mb-[7px] flex flex-1 flex-col bg-[#e2edff] px-1 pb-1 pt-[3px]">
        <div className="flex pl-[7px] pr-[7px]">
          <div className="flex gap-2">
            <NavButtons forwardOff />
            <OutputButtons />
            <div className="flex">
              <button type="button" aria-label="Menü" className={`${toolBtn} w-[60px]`}>
                <span className="flex w-[43px] items-center justify-center">
                  <svg width="30" height="30" viewBox="0 0 30 30">
                    <rect x="0.500" y="0.500" width="29" height="29" fill="#fff" stroke="#8795ad" />
                    <rect x="3" y="3" width="24" height="24" fill="#1b2470" />
                    <text x="15" y="20.500" textAnchor="middle" fontSize="15" fontWeight="bold" fill="#fff" fontFamily="DejaVu Sans, sans-serif">M</text>
                  </svg>
                </span>
                <span className="flex h-full flex-1 items-center justify-center border-l border-[#7593bb]">
                  <SmallCaret className="text-[#3f6fb5]" />
                </span>
              </button>
            </div>
            <ToolButton label="Çıkış" width="w-[80px]"><Door /></ToolButton>
          </div>
          <RecordInfo title="Stok Hareketleri" id="10223" />
        </div>
        <section className="mt-[7px] flex flex-1 flex-col border border-[#b4c7e3]">
          <div className="px-[5px] pt-[7px]">
            <SearchBox placeholder="Aramak için metin giriniz..." />
          </div>
          <p className="mb-[7px] mt-[17px] pl-[7px] leading-[18px] text-[#6f9bd8]">Gruplamak istediğiniz sütun başlığını buraya sürükleyiniz</p>
          <div className="flex-1 bg-white">
            <MovesTable />
          </div>
          <div className="flex h-6 items-center justify-end gap-px border-t border-[#6593cf] bg-[linear-gradient(#ffffff,#c7ddfe)] pr-[109px] text-right text-[#1a3f94]">
            <span className="h-[21px] w-[79px] border border-[#9dbbe6] pr-[2px] leading-5">20,00</span>
            <span className="h-[21px] w-[79px] border border-[#9dbbe6] pr-[2px] leading-5">,00</span>
          </div>
          <Pager />
        </section>
        <Filters />
      </main>
      <Badge n="5" className="left-[306px] top-[188px]" />
      <Badge n="3" className="right-8 top-[462px]" />
      <Badge n="4" className="right-[31px] top-[525px]" />
    </div>
  );
}

export default function App() {
  return (
    <div className="relative min-h-screen overflow-hidden bg-[#e2edff] font-[Roboto,'Noto_Sans',sans-serif] text-[11px] leading-4 text-black">
      <Defs />
      <BackWindow />
      <Badge n="1" className="left-[152px] top-[288px]" />
      <Badge n="2" className="left-1 top-[492px]" />
      <FrontWindow />
    </div>
  );
}
